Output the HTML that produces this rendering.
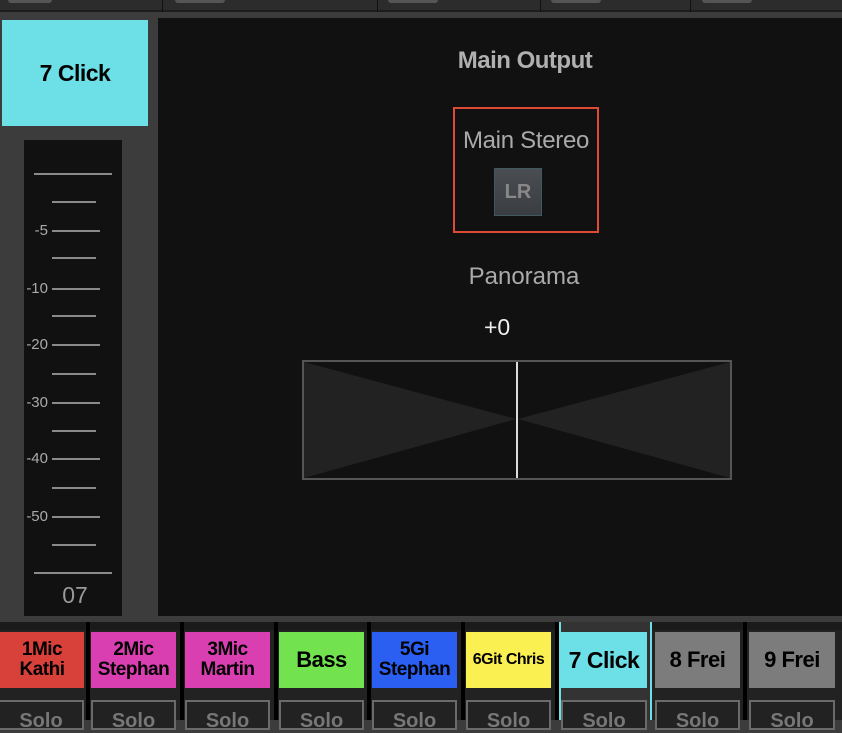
<!DOCTYPE html><html><head><style>
body{margin:0;width:842px;height:720px;background:#3c3c3c;position:relative;overflow:hidden;font-family:"Liberation Sans",sans-serif}
div{position:absolute;box-sizing:border-box}
.n{font-weight:bold;color:#000;text-align:center;display:flex;align-items:center;justify-content:center;line-height:1.05;font-size:19px;letter-spacing:-0.5px}
.t{background:#8a8a8a;height:2px}
.lbl{color:#aaa;font-size:15px;width:40px;text-align:right;left:-16px}
.solo{top:700px;height:30px;border:2px solid #6a6a6a;background:#222;color:#777;font-size:20px;text-align:center;font-weight:bold;padding-top:8px}
</style></head><body>
<div style="left:0;top:0;width:842px;height:12px;background:#2c2c2c;border-bottom:2px solid #1c1c1c"></div>
<div style="left:8px;top:0;width:44px;height:3px;background:#555;border-radius:0 0 3px 3px"></div>
<div style="left:175px;top:0;width:50px;height:3px;background:#555;border-radius:0 0 3px 3px"></div>
<div style="left:388px;top:0;width:50px;height:3px;background:#555;border-radius:0 0 3px 3px"></div>
<div style="left:551px;top:0;width:50px;height:3px;background:#555;border-radius:0 0 3px 3px"></div>
<div style="left:702px;top:0;width:50px;height:3px;background:#555;border-radius:0 0 3px 3px"></div>
<div style="left:162px;top:0;width:1px;height:12px;background:#111"></div>
<div style="left:377px;top:0;width:1px;height:12px;background:#111"></div>
<div style="left:540px;top:0;width:1px;height:12px;background:#111"></div>
<div style="left:690px;top:0;width:1px;height:12px;background:#111"></div>

<div class="n" style="left:2px;top:20px;width:146px;height:106px;background:#6ddfe6;font-size:23px">7 Click</div>

<div style="left:24px;top:140px;width:98px;height:476px;background:#111">
<div class="t" style="left:10px;top:33px;width:78px"></div>
<div class="t" style="left:28px;top:61px;width:44px"></div>
<div class="t" style="left:28px;top:90px;width:48px"></div><div class="lbl" style="top:82px">-5</div>
<div class="t" style="left:28px;top:117px;width:44px"></div>
<div class="t" style="left:28px;top:148px;width:48px"></div><div class="lbl" style="top:140px">-10</div>
<div class="t" style="left:28px;top:175px;width:44px"></div>
<div class="t" style="left:28px;top:204px;width:48px"></div><div class="lbl" style="top:196px">-20</div>
<div class="t" style="left:28px;top:233px;width:44px"></div>
<div class="t" style="left:28px;top:262px;width:48px"></div><div class="lbl" style="top:254px">-30</div>
<div class="t" style="left:28px;top:290px;width:44px"></div>
<div class="t" style="left:28px;top:318px;width:48px"></div><div class="lbl" style="top:310px">-40</div>
<div class="t" style="left:28px;top:347px;width:44px"></div>
<div class="t" style="left:28px;top:376px;width:48px"></div><div class="lbl" style="top:368px">-50</div>
<div class="t" style="left:28px;top:404px;width:44px"></div>
<div class="t" style="left:10px;top:432px;width:78px"></div>
<div style="left:0;top:442px;width:102px;text-align:center;color:#999;font-size:23px">07</div>
</div>

<div style="left:158px;top:18px;width:684px;height:598px;background:#111">
<div style="left:0;top:29px;width:734px;text-align:center;color:#b0b0b0;font-size:24px;font-weight:bold;letter-spacing:-0.5px">Main Output</div>
<div style="left:295px;top:89px;width:146px;height:126px;border:2px solid #e04a35"></div>
<div style="left:290px;top:109px;width:156px;text-align:center;color:#aaa;font-size:24px;letter-spacing:-0.3px">Main Stereo</div>
<div style="left:336px;top:150px;width:48px;height:48px;border:1px solid #3e5a5e;background:linear-gradient(#4a4d52,#3a3d42);color:#888;font-weight:bold;font-size:20px;text-align:center;padding-top:12px">LR</div>
<div style="left:0;top:245px;width:732px;text-align:center;color:#aaa;font-size:24px">Panorama</div>
<div style="left:326px;top:296px;color:#eee;font-size:23px">+0</div>
<svg style="position:absolute;left:144px;top:342px" width="430" height="120"><rect x="1" y="1" width="428" height="118" fill="#111" stroke="#555" stroke-width="2"/><polygon points="2,2 214,59 2,118" fill="#222"/><polygon points="428,2 216,59 428,118" fill="#222"/><line x1="215" y1="2" x2="215" y2="118" stroke="#ddd" stroke-width="2"/></svg>
</div>

<div style="left:0;top:622px;width:842px;height:98px;background:#222"></div>
<div style="left:0;top:622px;width:842px;height:8px;background:#1a1a1a"></div>
<div style="left:86px;top:622px;width:4px;height:98px;background:#000"></div>
<div style="left:180px;top:622px;width:4px;height:98px;background:#000"></div>
<div style="left:274px;top:622px;width:4px;height:98px;background:#000"></div>
<div style="left:367px;top:622px;width:4px;height:98px;background:#000"></div>
<div style="left:461px;top:622px;width:4px;height:98px;background:#000"></div>
<div style="left:555px;top:622px;width:4px;height:98px;background:#000"></div>
<div style="left:559px;top:622px;width:93px;height:98px;background:#333;border-left:2px solid #6ddfe6;border-right:2px solid #6ddfe6"></div>
<div style="left:743px;top:622px;width:4px;height:98px;background:#000"></div>

<div class="n" style="left:0;top:632px;width:84px;height:56px;background:#d8403a">1Mic<br>Kathi</div>
<div class="n" style="left:91px;top:632px;width:85px;height:56px;background:#d93fb0">2Mic<br>Stephan</div>
<div class="n" style="left:185px;top:632px;width:85px;height:56px;background:#d93fb0">3Mic<br>Martin</div>
<div class="n" style="left:279px;top:632px;width:85px;height:56px;background:#72e24e;font-size:22px">Bass</div>
<div class="n" style="left:372px;top:632px;width:85px;height:56px;background:#2a5ff2">5Gi<br>Stephan</div>
<div class="n" style="left:466px;top:632px;width:85px;height:56px;background:#fbf052;font-size:16px">6Git Chris</div>
<div class="n" style="left:561px;top:632px;width:86px;height:56px;background:#6ddfe6;font-size:23px">7 Click</div>
<div class="n" style="left:655px;top:632px;width:85px;height:56px;background:#7c7c7c;font-size:22px">8 Frei</div>
<div class="n" style="left:749px;top:632px;width:86px;height:56px;background:#7c7c7c;font-size:22px">9 Frei</div>

<div class="solo" style="left:-2px;width:86px">Solo</div>
<div class="solo" style="left:91px;width:85px">Solo</div>
<div class="solo" style="left:185px;width:85px">Solo</div>
<div class="solo" style="left:279px;width:85px">Solo</div>
<div class="solo" style="left:372px;width:85px">Solo</div>
<div class="solo" style="left:466px;width:85px">Solo</div>
<div class="solo" style="left:561px;width:86px">Solo</div>
<div class="solo" style="left:655px;width:85px">Solo</div>
<div class="solo" style="left:749px;width:86px">Solo</div>
</body></html>
